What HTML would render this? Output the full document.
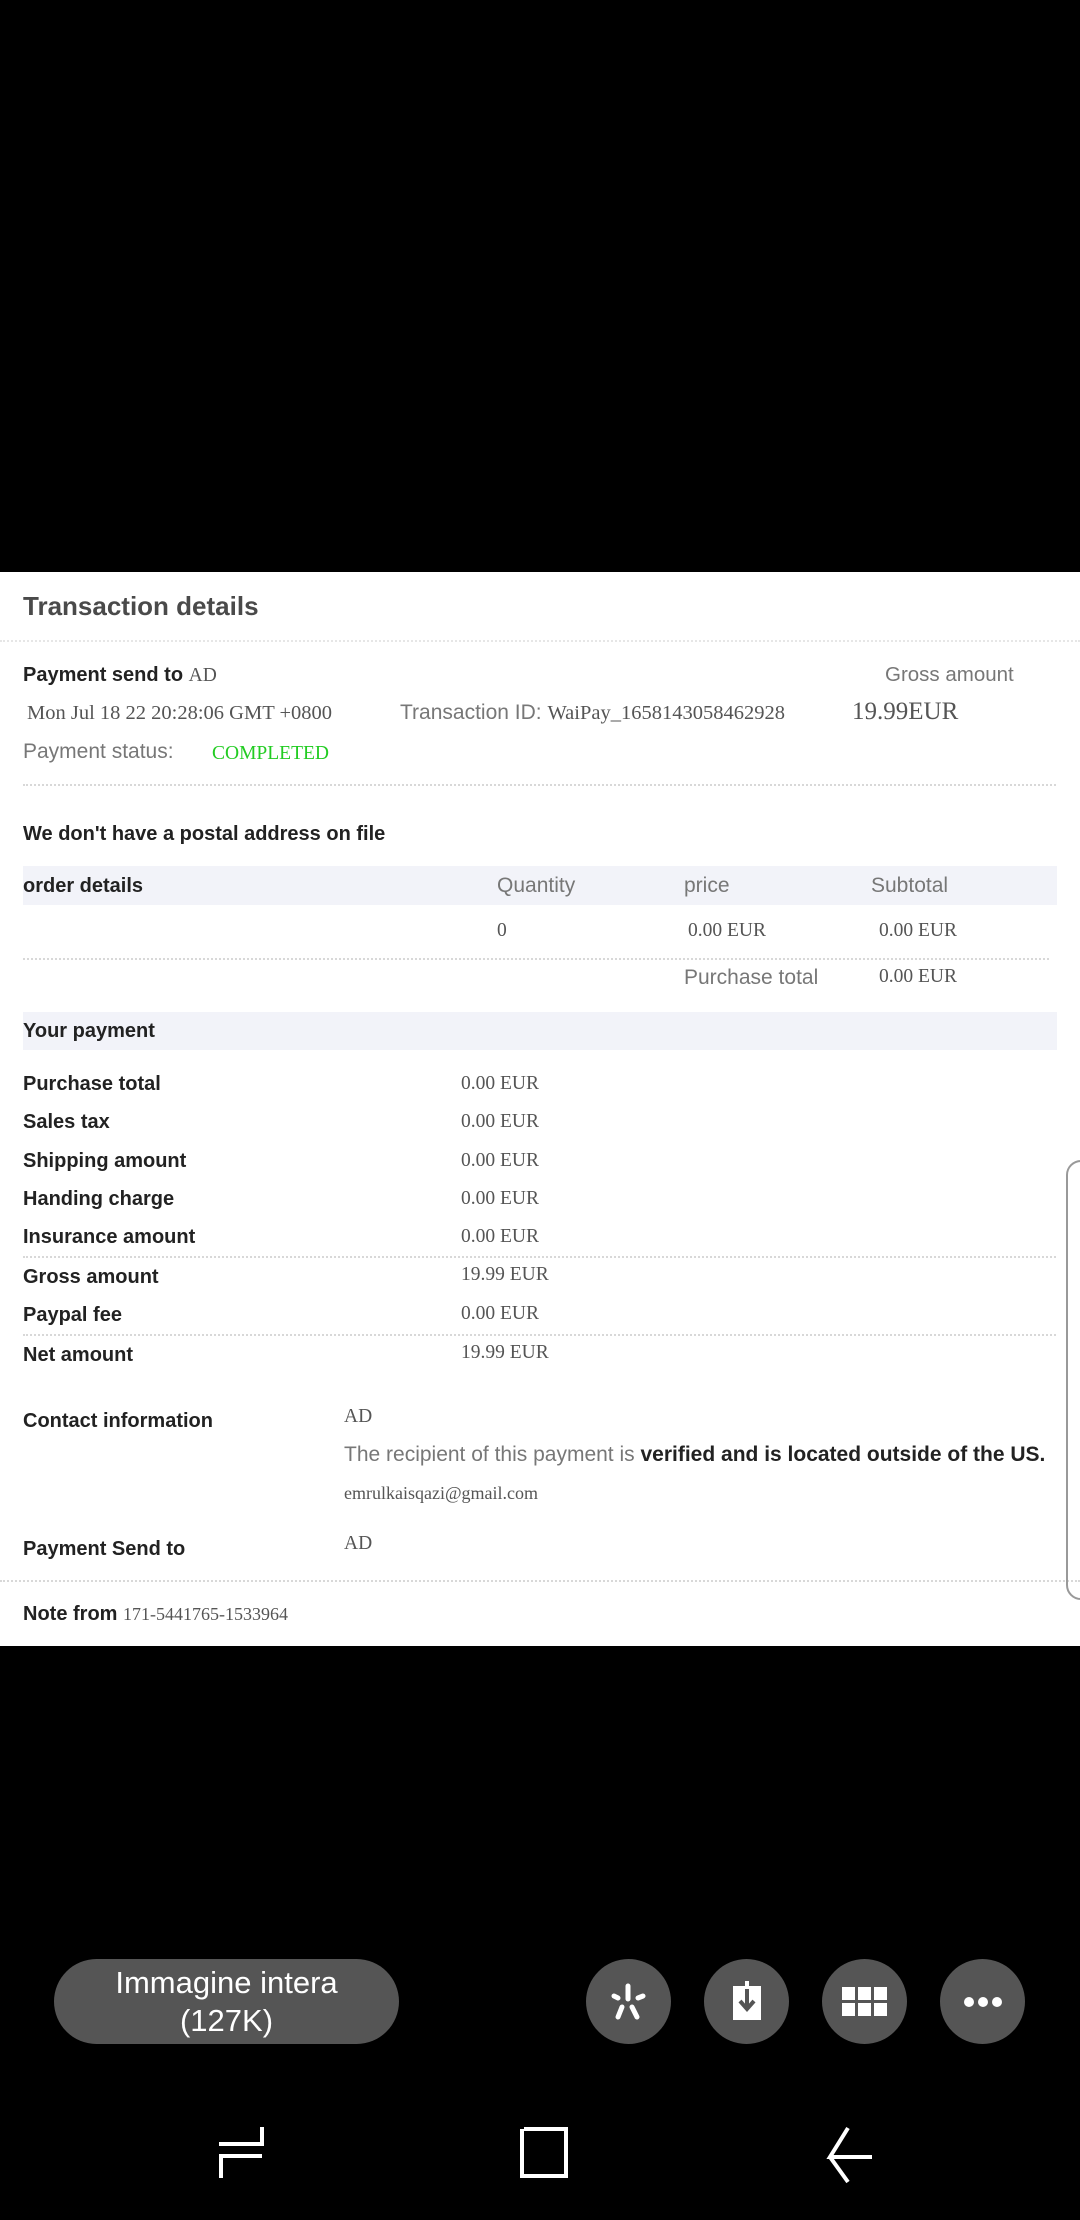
<!DOCTYPE html>
<html><head><meta charset="utf-8"><style>
body{margin:0;width:1080px;height:2220px;background:#000;position:relative;overflow:hidden;font-family:"Liberation Sans",sans-serif;}
.w{position:absolute;left:0;top:572px;width:1080px;height:1074px;background:#fff;}
.t{position:absolute;line-height:30px;white-space:nowrap;}
.b{font-weight:bold;color:#222;font-size:20px;}
.g{color:#777;font-size:20px;}
.s{font-family:"Liberation Serif",serif;color:#555;font-size:19.5px;}
.d{position:absolute;border-top:2px dotted #d8d8d8;height:0;}
.band{position:absolute;left:23px;width:1034px;background:#f2f3f9;}
.c{position:absolute;border-radius:50%;background:#555;width:85px;height:85px;}
</style></head><body>
<div class="w"></div>
<div class="d" style="left:0;top:640px;width:1080px;border-color:#e6e6e6"></div>
<div class="t" style="left:23px;top:591px;font-size:26px;font-weight:bold;color:#4a4a4a">Transaction details</div>
<div class="t b" style="left:23px;top:660px">Payment send to <span class="s" style="font-weight:normal">AD</span></div>
<div class="t g" style="left:885px;top:660px;font-size:20.5px">Gross amount</div>
<div class="t s" style="left:27px;top:698px;font-size:20.5px">Mon Jul 18 22 20:28:06 GMT +0800</div>
<div class="t g" style="left:400px;top:698px;font-size:21px">Transaction ID: <span class="s" style="font-size:20.5px">WaiPay_1658143058462928</span></div>
<div class="t s" style="left:852px;top:697px;font-size:25px">19.99EUR</div>
<div class="t g" style="left:23px;top:737px;font-size:21px">Payment status:</div>
<div class="t s" style="left:212px;top:739px;color:#2c2">COMPLETED</div>
<div class="d" style="left:23px;top:784px;width:1033px"></div>
<div class="t b" style="left:23px;top:819px">We don't have a postal address on file</div>
<div class="band" style="top:866px;height:39px"></div>
<div class="t b" style="left:23px;top:871px">order details</div>
<div class="t g" style="left:497px;top:871px;font-size:21px">Quantity</div>
<div class="t g" style="left:684px;top:871px;font-size:21px">price</div>
<div class="t g" style="left:871px;top:871px;font-size:21px">Subtotal</div>
<div class="t s" style="left:497px;top:916px">0</div>
<div class="t s" style="left:688px;top:916px">0.00 EUR</div>
<div class="t s" style="left:879px;top:916px">0.00 EUR</div>
<div class="d" style="left:23px;top:958px;width:1026px"></div>
<div class="t g" style="left:684px;top:963px;font-size:21px">Purchase total</div>
<div class="t s" style="left:879px;top:962px">0.00 EUR</div>
<div class="band" style="top:1012px;height:38px"></div>
<div class="t b" style="left:23px;top:1016px">Your payment</div>
<div class="t b" style="left:23px;top:1069px">Purchase total</div><div class="t s" style="left:461px;top:1069px">0.00 EUR</div>
<div class="t b" style="left:23px;top:1107px">Sales tax</div><div class="t s" style="left:461px;top:1107px">0.00 EUR</div>
<div class="t b" style="left:23px;top:1146px">Shipping amount</div><div class="t s" style="left:461px;top:1146px">0.00 EUR</div>
<div class="t b" style="left:23px;top:1184px">Handing charge</div><div class="t s" style="left:461px;top:1184px">0.00 EUR</div>
<div class="t b" style="left:23px;top:1222px">Insurance amount</div><div class="t s" style="left:461px;top:1222px">0.00 EUR</div>
<div class="d" style="left:23px;top:1256px;width:1033px"></div>
<div class="t b" style="left:23px;top:1262px">Gross amount</div><div class="t s" style="left:461px;top:1260px">19.99 EUR</div>
<div class="t b" style="left:23px;top:1300px">Paypal fee</div><div class="t s" style="left:461px;top:1299px">0.00 EUR</div>
<div class="d" style="left:23px;top:1334px;width:1033px"></div>
<div class="t b" style="left:23px;top:1340px">Net amount</div><div class="t s" style="left:461px;top:1338px">19.99 EUR</div>
<div class="t b" style="left:23px;top:1406px">Contact information</div>
<div class="t s" style="left:344px;top:1402px">AD</div>
<div class="t g" style="left:344px;top:1440px;font-size:21px">The recipient of this payment is <b style="color:#222">verified and is located outside of the US.</b></div>
<div class="t s" style="left:344px;top:1478px;font-size:18px">emrulkaisqazi@gmail.com</div>
<div class="t b" style="left:23px;top:1534px">Payment Send to</div>
<div class="t s" style="left:344px;top:1529px">AD</div>
<div class="d" style="left:0;top:1580px;width:1080px"></div>
<div class="t b" style="left:23px;top:1599px">Note from <span class="s" style="font-weight:normal;font-size:18px">171-5441765-1533964</span></div>
<div style="position:absolute;left:1066px;top:1160px;width:30px;height:440px;border:2px solid #999;border-radius:16px;box-sizing:border-box"></div>

<div style="position:absolute;left:54px;top:1959px;width:345px;height:85px;border-radius:43px;background:#555;color:#fff;font-size:31px;text-align:center;line-height:38px;padding-top:5px;box-sizing:border-box">Immagine intera<br>(127K)</div>
<div class="c" style="left:586px;top:1959px"><svg width="85" height="85" viewBox="0 0 85 85"><g stroke="#fff" stroke-width="5" stroke-linecap="round"><line x1="42" y1="27" x2="42" y2="40"/><line x1="28" y1="37" x2="32" y2="39"/><line x1="52" y1="39" x2="57" y2="37"/><line x1="36" y1="48" x2="32" y2="58"/><line x1="46" y1="48" x2="51" y2="58"/></g></svg></div>
<div class="c" style="left:704px;top:1959px"><svg width="85" height="85" viewBox="0 0 85 85"><rect x="29" y="27" width="28" height="34" fill="#fff"/><line x1="43" y1="22" x2="43" y2="48" stroke="#555" stroke-width="4"/><line x1="43" y1="22" x2="43" y2="30" stroke="#fff" stroke-width="4"/><polyline points="36,42 43,50 50,42" fill="none" stroke="#555" stroke-width="4"/></svg></div>
<div class="c" style="left:822px;top:1959px"><svg width="85" height="85" viewBox="0 0 85 85"><g fill="#fff"><rect x="20" y="28" width="13" height="13"/><rect x="36" y="28" width="13" height="13"/><rect x="52" y="28" width="13" height="13"/><rect x="20" y="44" width="13" height="13"/><rect x="36" y="44" width="13" height="13"/><rect x="52" y="44" width="13" height="13"/></g></svg></div>
<div class="c" style="left:940px;top:1959px"><svg width="85" height="85" viewBox="0 0 85 85"><g fill="#fff"><circle cx="29" cy="43" r="5"/><circle cx="43" cy="43" r="5"/><circle cx="57" cy="43" r="5"/></g></svg></div>

<svg style="position:absolute;left:200px;top:2120px" width="700" height="70" viewBox="0 0 700 70"><g fill="none" stroke="#fff" stroke-width="4"><path d="M62 7 V24 H19"/><path d="M62 36 H21 V58"/><path d="M324 9 H366 V56 H322 V9"/><path d="M648 8 L630 37 H672 M630 37 L648 62"/></g></svg>
</body></html>
